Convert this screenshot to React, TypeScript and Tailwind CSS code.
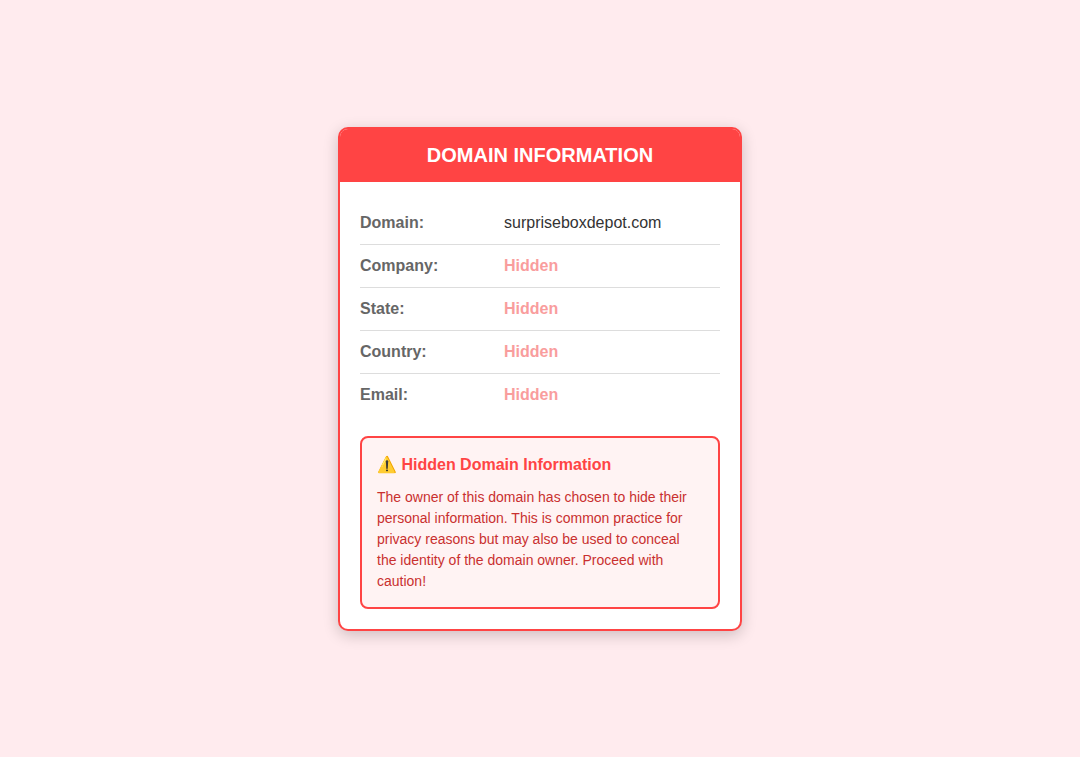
import clsx from "clsx";

const fields = [
  { label: "Domain:", value: "surpriseboxdepot.com" },
  { label: "Company:", value: null },
  { label: "State:", value: null },
  { label: "Country:", value: null },
  { label: "Email:", value: null },
];

export default function App() {
  return (
    <main className="flex min-h-screen items-center justify-center bg-[#ffebee] font-['Liberation_Sans',Arial,sans-serif] text-[#333]">
      <section className="w-full max-w-[404px] overflow-hidden rounded-[10px] border-2 border-[#f44] bg-white shadow-[0_4px_15px_rgba(0,0,0,0.2)]">
        <h1 className="bg-[#f44] p-[15px] text-center text-xl leading-[23px] font-bold text-white uppercase">
          Domain Information
        </h1>
        <div className="p-5">
          <dl>
            {fields.map(({ label, value }, i) => (
              <div
                key={label}
                className={clsx(
                  "flex py-3",
                  i < fields.length - 1 && "border-b border-[#ddd]"
                )}
              >
                <dt className="w-2/5 leading-[18px] font-bold text-[#666]">
                  {label}
                </dt>
                <dd
                  className={clsx(
                    "w-3/5 leading-[18px]",
                    !value && "font-bold text-[#f99d9d]"
                  )}
                >
                  {value ?? "Hidden"}
                </dd>
              </div>
            ))}
          </dl>
          <div className="mt-5 rounded-lg border-2 border-[#f44] bg-[#fff3f3] p-[15px]">
            <h2 className="mb-2.5 leading-6 font-bold text-[#f44]">
              ⚠️ Hidden Domain Information
            </h2>
            <p className="text-sm leading-[21px] text-[#c9302f]">
              The owner of this domain has chosen to hide their personal
              information. This is common practice for privacy reasons but may
              also be used to conceal the identity of the domain owner. Proceed
              with caution!
            </p>
          </div>
        </div>
      </section>
    </main>
  );
}
